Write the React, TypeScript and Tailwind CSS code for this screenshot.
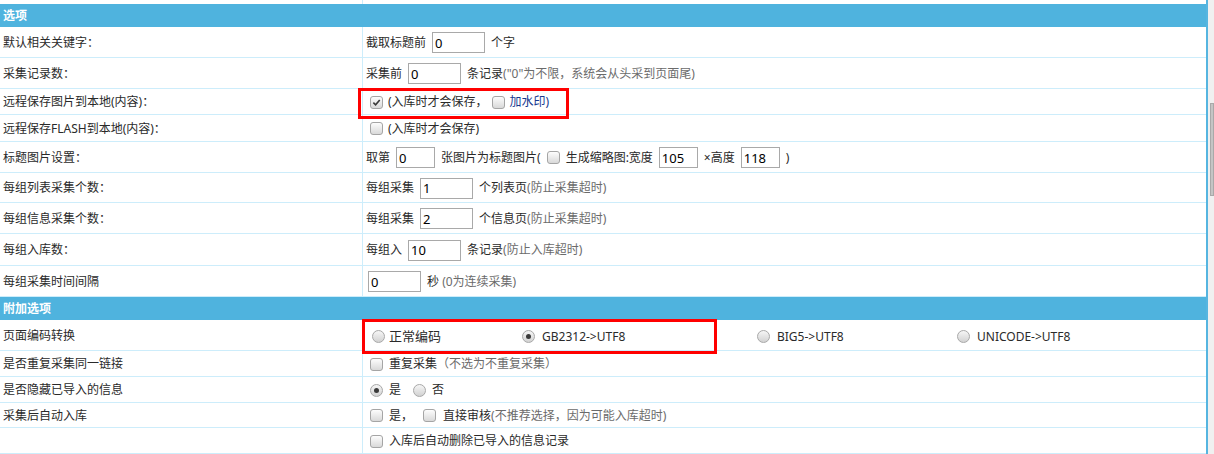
import React from "react";

const Check = ({ checked = false }: { checked?: boolean }) => (
  <span className="relative inline-flex h-[13px] w-[13px] shrink-0 items-center justify-center rounded-[3px] border border-[#a5a5a5] bg-gradient-to-b from-[#fdfdfd] to-[#d9d9d9]">
    {checked && (
      <svg viewBox="0 0 10 10" className="h-[9px] w-[9px]">
        <path d="M1.5 5.2 L4 7.6 L8.6 2.2" fill="none" stroke="#3a3a3a" strokeWidth="1.8" />
      </svg>
    )}
  </span>
);

const Radio = ({ checked = false }: { checked?: boolean }) => (
  <span className="inline-flex h-[13px] w-[13px] shrink-0 items-center justify-center rounded-full border border-[#a8a8a8] bg-gradient-to-b from-[#f6f6f6] to-[#d2d2d2]">
    {checked && <span className="h-[5px] w-[5px] rounded-full bg-[#3a3a3a]" />}
  </span>
);

const Field = ({ value, w = "w-[53px]" }: { value: string; w?: string }) => (
  <input
    readOnly
    defaultValue={value}
    className={`${w} mx-[6px] h-[21px] border border-[#a9a9a9] bg-white px-[2px] text-[13px] text-black outline-none`}
  />
);

const Hint = ({ children }: { children: React.ReactNode }) => (
  <span className="text-[#6b6b6b]">{children}</span>
);

const Row = ({
  label,
  h,
  children,
}: {
  label: string;
  h: string;
  children?: React.ReactNode;
}) => (
  <div className={`flex ${h} border-b border-[#cdedfb]`}>
    <div className="flex w-[363px] shrink-0 items-center border-r border-[#cdedfb] pl-[3px] pt-[1px]">
      {label}
    </div>
    <div className="flex flex-1 items-center pl-[3px] pt-[1px] whitespace-nowrap">{children}</div>
  </div>
);

const Bar = ({ title }: { title: string }) => (
  <div className="flex h-[23px] items-center bg-[#4fb3de] pl-[3px] font-bold text-white">{title}</div>
);

export default function App() {
  return (
    <div className="flex h-[454px] w-[1214px] overflow-hidden bg-white font-['Noto_Sans','Noto_Sans_CJK_SC',sans-serif] text-[12px] leading-none text-[#2a2a2a]">
      <div className="relative flex-1">
        <div className="flex h-[4px]">
          <div className="w-[363px] border-r border-[#cdedfb]" />
        </div>
        <Bar title="选项" />

        <Row label="默认相关关键字：" h="h-[31px]">
          截取标题前
          <Field value="0" />
          个字
        </Row>
        <Row label="采集记录数：" h="h-[31px]">
          采集前
          <Field value="0" />
          条记录<Hint>("0"为不限，系统会从头采到页面尾)</Hint>
        </Row>
        <Row label="远程保存图片到本地(内容)：" h="h-[26px]">
          <span className="ml-[4px] mr-[5px] flex">
            <Check checked />
          </span>
          (入库时才会保存，
          <span className="ml-[4px] mr-[5px] flex">
            <Check />
          </span>
          <span className="text-[#17398f]">加水印)</span>
        </Row>
        <Row label="远程保存FLASH到本地(内容)：" h="h-[27px]">
          <span className="ml-[4px] mr-[5px] flex">
            <Check />
          </span>
          (入库时才会保存)
        </Row>
        <Row label="标题图片设置：" h="h-[31px]">
          取第
          <Field value="0" w="w-[39px]" />
          张图片为标题图片(
          <span className="ml-[6px] mr-[6px] flex">
            <Check />
          </span>
          生成缩略图:宽度
          <Field value="105" w="w-[39px]" />
          ×高度
          <Field value="118" w="w-[39px]" />)
        </Row>
        <Row label="每组列表采集个数：" h="h-[30px]">
          每组采集
          <Field value="1" />
          个列表页<Hint>(防止采集超时)</Hint>
        </Row>
        <Row label="每组信息采集个数：" h="h-[31px]">
          每组采集
          <Field value="2" />
          个信息页<Hint>(防止采集超时)</Hint>
        </Row>
        <Row label="每组入库数：" h="h-[32px]">
          每组入
          <Field value="10" />
          条记录<Hint>(防止入库超时)</Hint>
        </Row>
        <Row label="每组采集时间间隔" h="h-[31px]">
          <span className="-ml-[4px] flex">
            <Field value="0" />
          </span>
          秒 <Hint>&nbsp;(0为连续采集)</Hint>
        </Row>

        <Bar title="附加选项" />

        <div className="flex h-[31px] border-b border-[#cdedfb]">
          <div className="flex w-[363px] shrink-0 items-center border-r border-[#cdedfb] pl-[3px] pt-[1px]">
            页面编码转换
          </div>
          <div className="flex flex-1 items-center pt-[3px]">
            <div className="flex w-[150px] items-center gap-[4px] pl-[9px]">
              <Radio />
              <span className="text-[13px]">正常编码</span>
            </div>
            <div className="flex w-[235px] items-center gap-[7px] pl-[9px]">
              <Radio checked />
              GB2312-&gt;UTF8
            </div>
            <div className="flex w-[200px] items-center gap-[7px] pl-[9px]">
              <Radio />
              BIG5-&gt;UTF8
            </div>
            <div className="flex flex-1 items-center gap-[7px] pl-[9px]">
              <Radio />
              UNICODE-&gt;UTF8
            </div>
          </div>
        </div>
        <Row label="是否重复采集同一链接" h="h-[26px]">
          <span className="ml-[4px] mr-[6px] flex">
            <Check />
          </span>
          重复采集<Hint>（不选为不重复采集）</Hint>
        </Row>
        <Row label="是否隐藏已导入的信息" h="h-[26px]">
          <span className="ml-[4px] mr-[6px] flex">
            <Radio checked />
          </span>
          是
          <span className="ml-[12px] mr-[6px] flex">
            <Radio />
          </span>
          否
        </Row>
        <Row label="采集后自动入库" h="h-[25px]">
          <span className="ml-[4px] mr-[6px] flex">
            <Check />
          </span>
          是，
          <span className="ml-[10px] mr-[7px] flex">
            <Check />
          </span>
          直接审核<Hint>(不推荐选择，因为可能入库超时)</Hint>
        </Row>
        <Row label="" h="h-[26px]">
          <span className="ml-[4px] mr-[6px] flex">
            <Check />
          </span>
          入库后自动删除已导入的信息记录
        </Row>

        {/* annotation boxes */}
        <div className="pointer-events-none absolute left-[358px] top-[88px] h-[31px] w-[211px] border-[3px] border-[#ff0000]" />
        <div className="pointer-events-none absolute left-[362px] top-[319px] h-[35px] w-[355px] border-[3px] border-[#ff0000]" />
      </div>

      {/* scrollbar */}
      <div className="w-[2px] bg-[#56b5e0]" />
      <div className="w-[6px] bg-[#f0f0f0] pl-[2px] pt-[103px]">
        <div className="h-[93px] w-[4px] border border-[#a9a9a9] bg-[#c4c4c4]" />
      </div>
    </div>
  );
}
